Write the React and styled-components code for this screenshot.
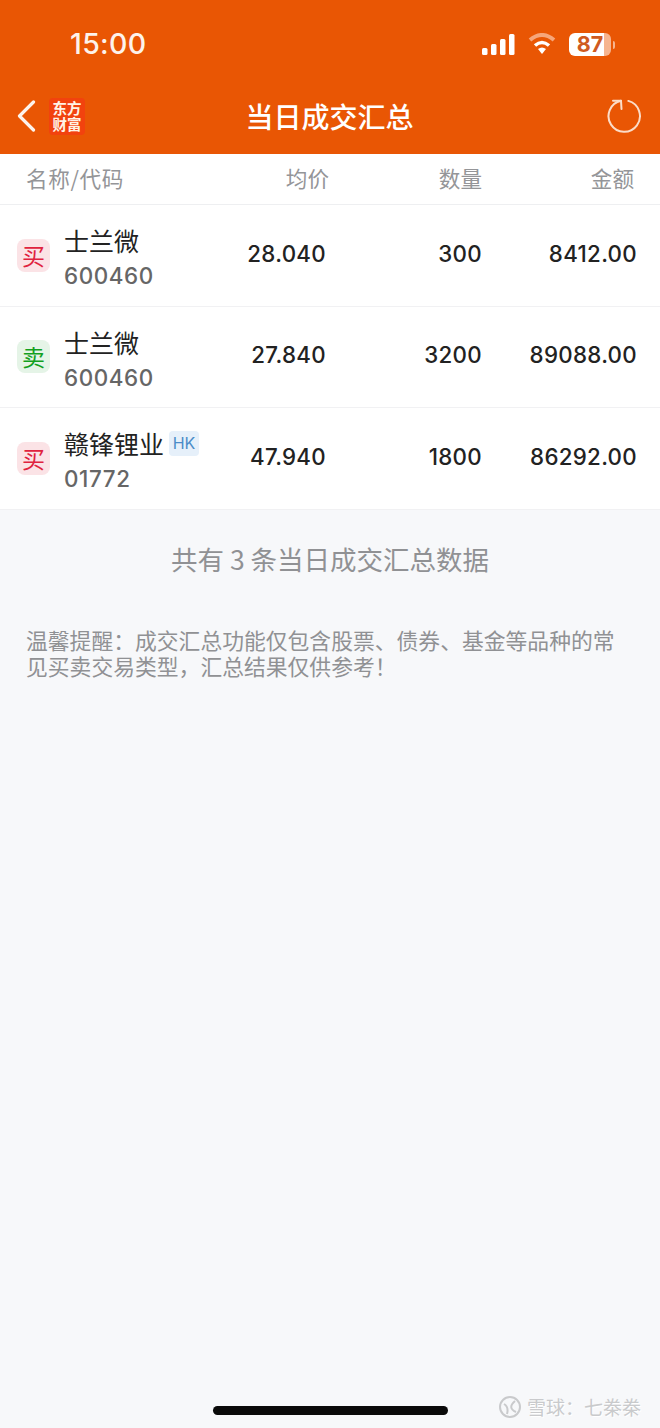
import React from "react";
import styled, { createGlobalStyle } from "styled-components";

const Global = createGlobalStyle`
  html, body { margin: 0; padding: 0; background: #f6f7f9; }
  body { font-family: Inter, "Noto Sans CJK SC", sans-serif; }
  * { box-sizing: border-box; }
`;

const Page = styled.div`
  position: relative;
  width: 660px;
  height: 1428px;
  overflow: hidden;
  background: #f7f8fa;
`;

const Top = styled.header`
  background: #e95604;
  color: #fff;
  height: 154px;
  display: flex;
  flex-direction: column;
`;

const StatusBar = styled.div`
  height: 78px;
  display: flex;
  align-items: center;
  justify-content: space-between;
  padding: 10px 49px 0 70px;
`;

const Clock = styled.span`
  font: 500 28.5px/32px Inter, sans-serif;
  letter-spacing: 0.3px;
  color: #fdf3ec;
`;

const StatusIcons = styled.div`
  display: flex;
  align-items: center;
  gap: 13px;
`;

const Battery = styled.div`
  position: relative;
  width: 42px;
  height: 23px;
  border-radius: 6px;
  background: linear-gradient(90deg, #fff 0 84%, #f6b48f 84% 100%);
  color: #cf5a20;
  font: 700 21.5px/23px Inter, sans-serif;
  text-align: center;
  &::after {
    content: "";
    position: absolute;
    right: -4px;
    top: 8px;
    width: 2px;
    height: 8px;
    border-radius: 0 2px 2px 0;
    background: #f6b48f;
  }
`;

const NavBar = styled.div`
  flex: 1;
  display: grid;
  grid-template-columns: 1fr auto 1fr;
  align-items: center;
  padding: 0 18px 0 17px;
`;

const NavLeft = styled.div`
  display: flex;
  align-items: center;
  gap: 13px;
`;

const Logo = styled.div`
  width: 36px;
  height: 37px;
  border-radius: 4px;
  background: #f2420e;
  color: #fff3e6;
  font: 700 14.5px/16px "Noto Sans CJK SC", sans-serif;
  text-align: center;
  padding-top: 2px;
`;

const Title = styled.h1`
  margin: 0;
  font: 500 28px/36px "Noto Sans CJK SC", sans-serif;
  color: #fff;
`;

const NavRight = styled.div`
  display: flex;
  justify-content: flex-end;
`;

const HeaderRow = styled.div`
  display: grid;
  grid-template-columns: 193px 110px 153px 152px;
  align-items: center;
  height: 51px;
  padding: 0 0 2px 26px;
  background: #fff;
  border-bottom: 1px solid #eeeff1;
  color: #949598;
  font: 400 21.6px/28px "Noto Sans CJK SC", sans-serif;
`;

const HeaderCell = styled.div`
  text-align: ${p => (p.$left ? "left" : "right")};
  letter-spacing: ${p => (p.$left ? "0.6px" : "0")};
`;

const Row = styled.div`
  display: grid;
  grid-template-columns: 234px 92px 156px 155px;
  align-items: center;
  height: 101.6px;
  background: #fff;
  border-bottom: 1px solid #f1f1f3;
`;

const NameCell = styled.div`
  display: flex;
  align-items: center;
  padding-left: 17px;
  gap: 14px;
`;

const Side = styled.div`
  width: 33px;
  height: 33px;
  border-radius: 8px;
  display: flex;
  align-items: center;
  justify-content: center;
  font: 400 23px/33px "Noto Sans CJK SC", sans-serif;
  background: ${p => (p.$sell ? "#e5f4e7" : "#fbe3e6")};
  color: ${p => (p.$sell ? "#12a01e" : "#e0233f")};
`;

const NameStack = styled.div`
  display: flex;
  flex-direction: column;
  gap: 4px;
  padding-top: 4px;
`;

const NameLine = styled.div`
  display: flex;
  align-items: center;
  gap: 5px;
  white-space: nowrap;
`;

const Name = styled.span`
  font: 400 25px/34px "Noto Sans CJK SC", sans-serif;
  color: #222;
`;

const Market = styled.span`
  width: 30px;
  height: 25px;
  border-radius: 4px;
  background: #e6f0fa;
  color: #4b8cc8;
  font: 400 16px/25px Inter, sans-serif;
  text-align: center;
`;

const Code = styled.span`
  font: 500 22.4px/30px Inter, sans-serif;
  letter-spacing: 0.6px;
  color: #666;
`;

const Num = styled.div`
  text-align: right;
  padding-bottom: 3px;
  font: 500 22.3px/30px Inter, sans-serif;
  letter-spacing: 0.3px;
  color: #222;
`;

const Summary = styled.p`
  margin: 30px 0 0;
  text-align: center;
  color: #909194;
  font: 400 26.5px/38px "Noto Sans CJK SC", sans-serif;
`;

const Notice = styled.p`
  margin: 49px 26px 0;
  color: #909194;
  font: 400 21.8px/26px "Noto Sans CJK SC", sans-serif;
`;

const HomeBar = styled.div`
  position: absolute;
  left: 213px;
  bottom: 13px;
  width: 235px;
  height: 9px;
  border-radius: 5px;
  background: #0a0a0a;
`;

const Watermark = styled.div`
  position: absolute;
  right: 19px;
  bottom: 8px;
  display: flex;
  align-items: center;
  gap: 5px;
  color: #c9cacc;
  font: 400 19px/26px "Noto Sans CJK SC", sans-serif;
  text-shadow: 1px 1px 0 #fff;
  white-space: nowrap;
`;

const rows = [
  { sell: false, name: "士兰微", code: "600460", price: "28.040", qty: "300", amount: "8412.00" },
  { sell: true, name: "士兰微", code: "600460", price: "27.840", qty: "3200", amount: "89088.00" },
  { sell: false, name: "赣锋锂业", hk: true, code: "01772", price: "47.940", qty: "1800", amount: "86292.00" },
];

const NOTICE = "温馨提醒\uFF1A成交汇总功能仅包含股票、债券、基金等品种的常见买卖交易类型\uFF0C汇总结果仅供参考\uFF01";
const MARK = "雪球\uFF1A七桊桊";

export default function App() {
  return (
    <Page>
      <Global />
      <Top>
        <StatusBar>
          <Clock>15:00</Clock>
          <StatusIcons>
            <svg width="33" height="21" viewBox="0 0 33 21" fill="#fff">
              <rect x="0" y="14" width="5.5" height="7" rx="1.5" />
              <rect x="9" y="10" width="5.5" height="11" rx="1.5" />
              <rect x="18" y="5" width="5.5" height="16" rx="1.5" />
              <rect x="27" y="0" width="5.5" height="21" rx="1.5" />
            </svg>
            <svg width="28" height="22" viewBox="0 0 28 22" fill="none">
              <path d="M2 7 Q14 -3 26 7" stroke="#f6a67a" strokeWidth="4" />
              <path d="M7 12.5 Q14 6.5 21 12.5" stroke="#fff" strokeWidth="3.6" />
              <path d="M10 16 L14 21 L18 16 Q14 13 10 16 Z" fill="#fff" />
            </svg>
            <Battery>87</Battery>
          </StatusIcons>
        </StatusBar>
        <NavBar>
          <NavLeft>
            <svg width="19" height="32" viewBox="0 0 19 32" fill="none" stroke="#fdf3ec" strokeWidth="3.2" strokeLinecap="round" strokeLinejoin="round">
              <path d="M16.5 2 L2.5 16 L16.5 30" />
            </svg>
            <Logo>东方<br />财富</Logo>
          </NavLeft>
          <Title>当日成交汇总</Title>
          <NavRight>
            <svg width="36" height="36" viewBox="0 0 36 36" fill="none" stroke="#fbdcc8" strokeWidth="2" strokeLinecap="round" strokeLinejoin="round">
              <path d="M22.3 2.9 A15.7 15.7 0 1 1 15 2.7" />
              <path d="M7 2.7 L15 2.7 L15.5 11" />
            </svg>
          </NavRight>
        </NavBar>
      </Top>
      <HeaderRow>
        <HeaderCell $left>名称/代码</HeaderCell>
        <HeaderCell>均价</HeaderCell>
        <HeaderCell>数量</HeaderCell>
        <HeaderCell>金额</HeaderCell>
      </HeaderRow>
      {rows.map((r, i) => (
        <Row key={i}>
          <NameCell>
            <Side $sell={r.sell}>{r.sell ? "卖" : "买"}</Side>
            <NameStack>
              <NameLine>
                <Name>{r.name}</Name>
                {r.hk && <Market>HK</Market>}
              </NameLine>
              <Code>{r.code}</Code>
            </NameStack>
          </NameCell>
          <Num>{r.price}</Num>
          <Num>{r.qty}</Num>
          <Num>{r.amount}</Num>
        </Row>
      ))}
      <Summary>共有 3 条当日成交汇总数据</Summary>
      <Notice>{NOTICE}</Notice>
      <HomeBar />
      <Watermark>
        <svg width="24" height="24" viewBox="0 0 24 24" fill="none" stroke="#c9cacc" strokeWidth="2">
          <circle cx="12" cy="12" r="10" />
          <path d="M6 9 Q11 12 9 19 M17 6 Q9 13 18 17" />
        </svg>
        {MARK}
      </Watermark>
    </Page>
  );
}
